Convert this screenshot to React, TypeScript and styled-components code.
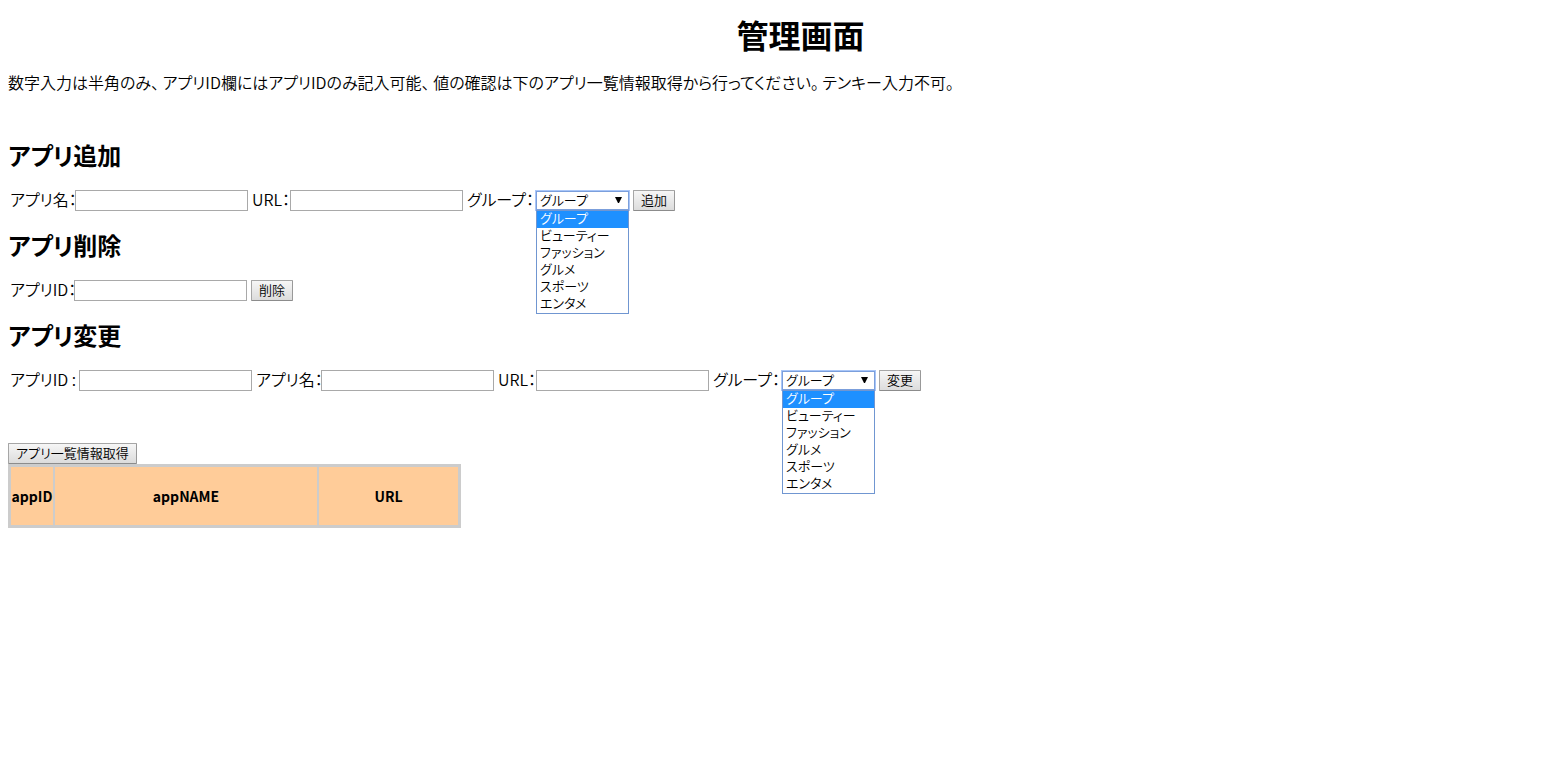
import React from 'react';
import styled, { createGlobalStyle } from 'styled-components';

const GlobalStyle = createGlobalStyle`
  body {
    margin: 8px;
    background: #fff;
    color: #000;
    font: 350 16px/20px "Noto Sans CJK JP", sans-serif;
    font-feature-settings: "palt";
  }
  button, input, select {
    box-sizing: border-box;
    font: inherit;
    font-size: 13px;
    font-feature-settings: inherit;
    color: #000;
  }
`;

const Title = styled.h1`
  margin: 10px 0 22px;
  padding-left: 36px;
  font-size: 32px;
  line-height: 32px;
  text-align: center;
  font-feature-settings: normal;
`;

const Note = styled.p`
  margin: 0 0 51px;
`;

const SectionTitle = styled.h2`
  margin: 22px 0 23px;
  font-size: 24px;
  line-height: 24px;
`;

const FormRow = styled.form`
  display: flex;
  align-items: center;
  gap: 4px;
  height: 21px;
  padding-left: 2px;
`;

const Field = styled.div`
  display: flex;
  align-items: center;
`;

const Label = styled.label<{ $width: number }>`
  width: ${(p) => p.$width}px;
  padding-bottom: 4px;
  white-space: nowrap;
`;

const TextInput = styled.input`
  width: 173px;
  height: 21px;
  padding: 1px 2px;
  border: 1px solid #a9a9a9;
  background: #fff;
`;

const Button = styled.button`
  display: block;
  height: 21px;
  padding: 0 7px 2px;
  border: 1px solid #a0a0a0;
  border-color: #a6a6a6 #999 #8c8c8c #a6a6a6;
  border-radius: 1px;
  background: linear-gradient(#f6f6f6, #dcdcdc);
  line-height: 17px;
  white-space: nowrap;
`;

const Picker = styled.div`
  position: relative;
  width: 93px;
`;

const Select = styled.select`
  display: block;
  appearance: none;
  width: 100%;
  height: 19px;
  padding: 0 18px 2px 3px;
  border: 1px solid #7b9fdc;
  border-radius: 0;
  outline: 1px solid #a9c6f8;
  background: #fff;
  line-height: 15px;
`;

const Arrow = styled.svg`
  position: absolute;
  top: 6px;
  right: 7px;
  pointer-events: none;
`;

const Menu = styled.ul`
  position: absolute;
  z-index: 1;
  top: 100%;
  left: 0;
  right: 0;
  margin: 0;
  padding: 0;
  border: 1px solid #7096d1;
  background: #fff;
  list-style: none;
`;

const MenuItem = styled.li<{ $active: boolean }>`
  padding: 0 0 4px 3px;
  font-size: 13px;
  line-height: 13px;
  background: ${(p) => (p.$active ? '#1e90ff' : 'transparent')};
  color: ${(p) => (p.$active ? '#fff' : '#000')};
`;

const ListArea = styled.section`
  margin-top: 52px;
`;

const AppTable = styled.table`
  border: 1px solid #ccc;
  border-spacing: 2px;
  background: #ccc;
  font-size: 14px;
`;

const HeadCell = styled.th<{ $width: number }>`
  box-sizing: border-box;
  width: ${(p) => p.$width}px;
  min-width: ${(p) => p.$width}px;
  height: 58px;
  padding: 0;
  background: #fc9;
`;

const groups = ['グループ', 'ビューティー', 'ファッション', 'グルメ', 'スポーツ', 'エンタメ'];

function TextField({ id, label, width }: { id: string; label: string; width: number }) {
  return (
    <Field>
      <Label htmlFor={id} $width={width}>{label}</Label>
      <TextInput id={id} type="text" />
    </Field>
  );
}

function GroupField({ id }: { id: string }) {
  const [value, setValue] = React.useState(groups[0]);
  return (
    <Field>
      <Label htmlFor={id} $width={69}>グループ：</Label>
      <Picker>
        <Select id={id} value={value} onChange={(e) => setValue(e.target.value)}>
          {groups.map((g) => <option key={g}>{g}</option>)}
        </Select>
        <Arrow width="7" height="7" viewBox="0 0 7 7" aria-hidden="true">
          <path d="M0 0H7L4 6H3Z" fill="#000" />
        </Arrow>
        <Menu role="listbox" aria-label="グループ">
          {groups.map((g) => (
            <MenuItem key={g} role="option" aria-selected={g === value} $active={g === value} onClick={() => setValue(g)}>
              {g}
            </MenuItem>
          ))}
        </Menu>
      </Picker>
    </Field>
  );
}

export default function App() {
  return (
    <main>
      <GlobalStyle />
      <Title>管理画面</Title>
      <Note>
        数字入力は半角のみ、 アプリID欄にはアプリIDのみ記入可能、 値の確認は下のアプリ一覧情報取得から行ってください。 テンキー入力不可。
      </Note>

      <SectionTitle>アプリ追加</SectionTitle>
      <FormRow>
        <TextField id="add-name" label="アプリ名：" width={65} />
        <TextField id="add-url" label="URL：" width={38} />
        <GroupField id="add-group" />
        <Button type="button">追加</Button>
      </FormRow>

      <SectionTitle>アプリ削除</SectionTitle>
      <FormRow>
        <TextField id="delete-id" label="アプリID：" width={64} />
        <Button type="button">削除</Button>
      </FormRow>

      <SectionTitle>アプリ変更</SectionTitle>
      <FormRow>
        <TextField id="edit-id" label="アプリID : " width={69} />
        <TextField id="edit-name" label="アプリ名：" width={65} />
        <TextField id="edit-url" label="URL：" width={38} />
        <GroupField id="edit-group" />
        <Button type="button">変更</Button>
      </FormRow>

      <ListArea>
        <Button type="button">アプリ一覧情報取得</Button>
        <AppTable>
          <thead>
            <tr>
              <HeadCell scope="col" $width={42}>appID</HeadCell>
              <HeadCell scope="col" $width={262}>appNAME</HeadCell>
              <HeadCell scope="col" $width={139}>URL</HeadCell>
            </tr>
          </thead>
        </AppTable>
      </ListArea>
    </main>
  );
}
